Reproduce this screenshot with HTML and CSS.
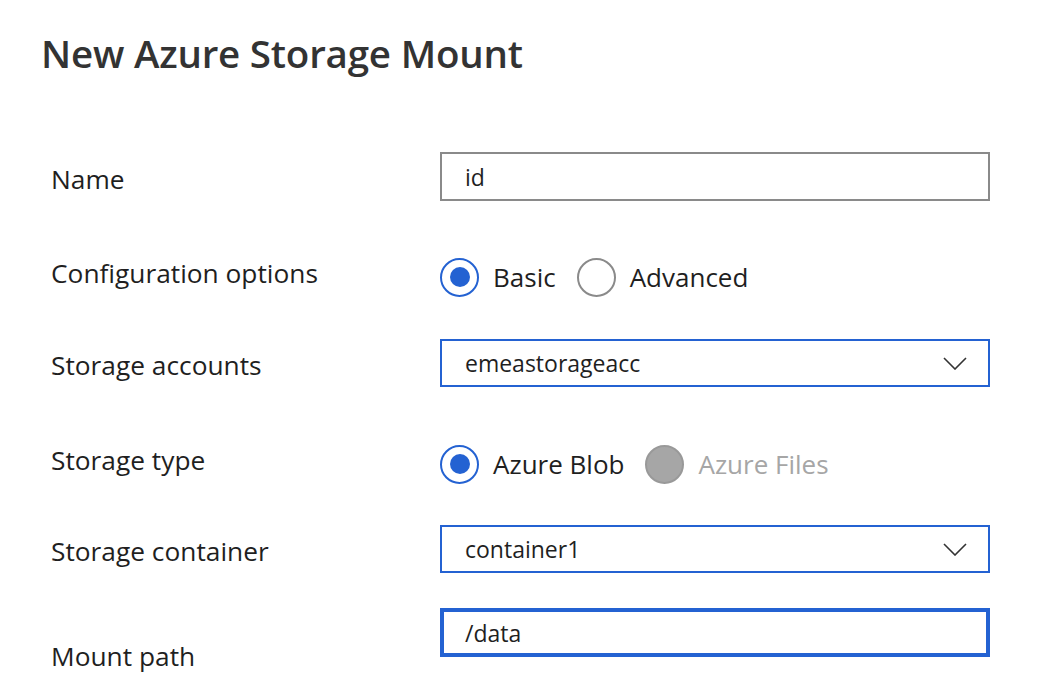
FILE: index.html
```html
<!DOCTYPE html>
<html lang="en">
<head>
<meta charset="utf-8">
<title>New Azure Storage Mount</title>
<link rel="stylesheet" href="styles.css">
</head>
<body>
<div class="page">
  <h1 class="title">New Azure Storage Mount</h1>
  <div class="form">
    <div class="row row-name">
      <div class="label">Name</div>
      <div class="field input"><span class="value">id</span></div>
    </div>
    <div class="row row-config">
      <div class="label">Configuration options</div>
      <div class="radios">
        <div class="radio-item"><span class="radio checked"></span><span class="radio-text">Basic</span></div>
        <div class="radio-item"><span class="radio"></span><span class="radio-text">Advanced</span></div>
      </div>
    </div>
    <div class="row row-accounts">
      <div class="label">Storage accounts</div>
      <div class="field select"><span class="value">emeastorageacc</span>
        <svg class="chevron" width="24" height="13" viewBox="0 0 24 13"><path d="M1 1 L12 12 L23 1" fill="none" stroke="#333" stroke-width="1.6"/></svg>
      </div>
    </div>
    <div class="row row-type">
      <div class="label">Storage type</div>
      <div class="radios">
        <div class="radio-item"><span class="radio checked"></span><span class="radio-text">Azure Blob</span></div>
        <div class="radio-item disabled"><span class="radio"></span><span class="radio-text">Azure Files</span></div>
      </div>
    </div>
    <div class="row row-container">
      <div class="label">Storage container</div>
      <div class="field select"><span class="value">container1</span>
        <svg class="chevron" width="24" height="13" viewBox="0 0 24 13"><path d="M1 1 L12 12 L23 1" fill="none" stroke="#333" stroke-width="1.6"/></svg>
      </div>
    </div>
    <div class="row row-mount">
      <div class="label">Mount path</div>
      <div class="field input focused"><span class="value">/data</span></div>
    </div>
  </div>
</div>
</body>
</html>
```
FILE: styles.css
```css
* { box-sizing: border-box; }
html, body { margin: 0; padding: 0; background: #ffffff; }
body {
  font-family: "Open Sans", "Noto Sans", "DejaVu Sans", sans-serif;
  color: #1f1f1f;
  width: 1046px;
  height: 674px;
  overflow: hidden;
}
.page { padding: 29px 0 0 41px; }
.title {
  margin: 0;
  font-size: 38.5px;
  font-weight: 600;
  color: #333333;
  line-height: 48px;
  letter-spacing: -0.2px;
}
.form { padding-left: 10px; margin-top: 75px; }
.row {
  display: grid;
  grid-template-columns: 389px 550px;
  align-items: center;
}
.label { font-size: 26.3px; line-height: 30px; color: #1f1f1f; }
.row-name .label { margin-top: 5px; }
.row-config { margin-top: 56px; }
.row-config .label { margin-top: -8px; }
.row-accounts { margin-top: 42px; }
.row-accounts .label { margin-top: 4px; }
.row-type { margin-top: 57px; }
.row-type .label { margin-top: -9px; }
.row-container { margin-top: 41px; }
.row-container .label { margin-top: 4px; }
.row-mount { margin-top: 35px; align-items: start; }
.row-mount .label { margin-top: 34px; line-height: 28px; }

.field {
  height: 49px;
  border: 2px solid #8a8a8a;
  display: flex;
  align-items: center;
  padding: 0 20px 0 23px;
  font-size: 23px;
  color: #1f1f1f;
}
.select { border-color: #2462d2; height: 48px; justify-content: space-between; }
.select .value { margin-top: -1px; }
.focused { border: 4px solid #2462d2; padding-left: 21px; }
.chevron { display: block; margin-right: 1px; }

.radios { display: flex; align-items: center; height: 40px; }
.radio-item { display: flex; align-items: center; margin-right: 21px; }
.radio {
  width: 39px;
  height: 39px;
  border-radius: 50%;
  border: 2px solid #8a8a8a;
  display: flex;
  align-items: center;
  justify-content: center;
  flex: none;
}
.radio.checked { border-color: #2462d2; }
.radio.checked::after {
  content: "";
  width: 20px;
  height: 20px;
  border-radius: 50%;
  background: #2462d2;
}
.radio-text { margin-left: 14px; font-size: 26px; line-height: 30px; color: #1f1f1f; }
.disabled .radio { background: #a6a6a6; border-color: #999999; }
.disabled .radio-text { color: #a6a6a6; }
```
